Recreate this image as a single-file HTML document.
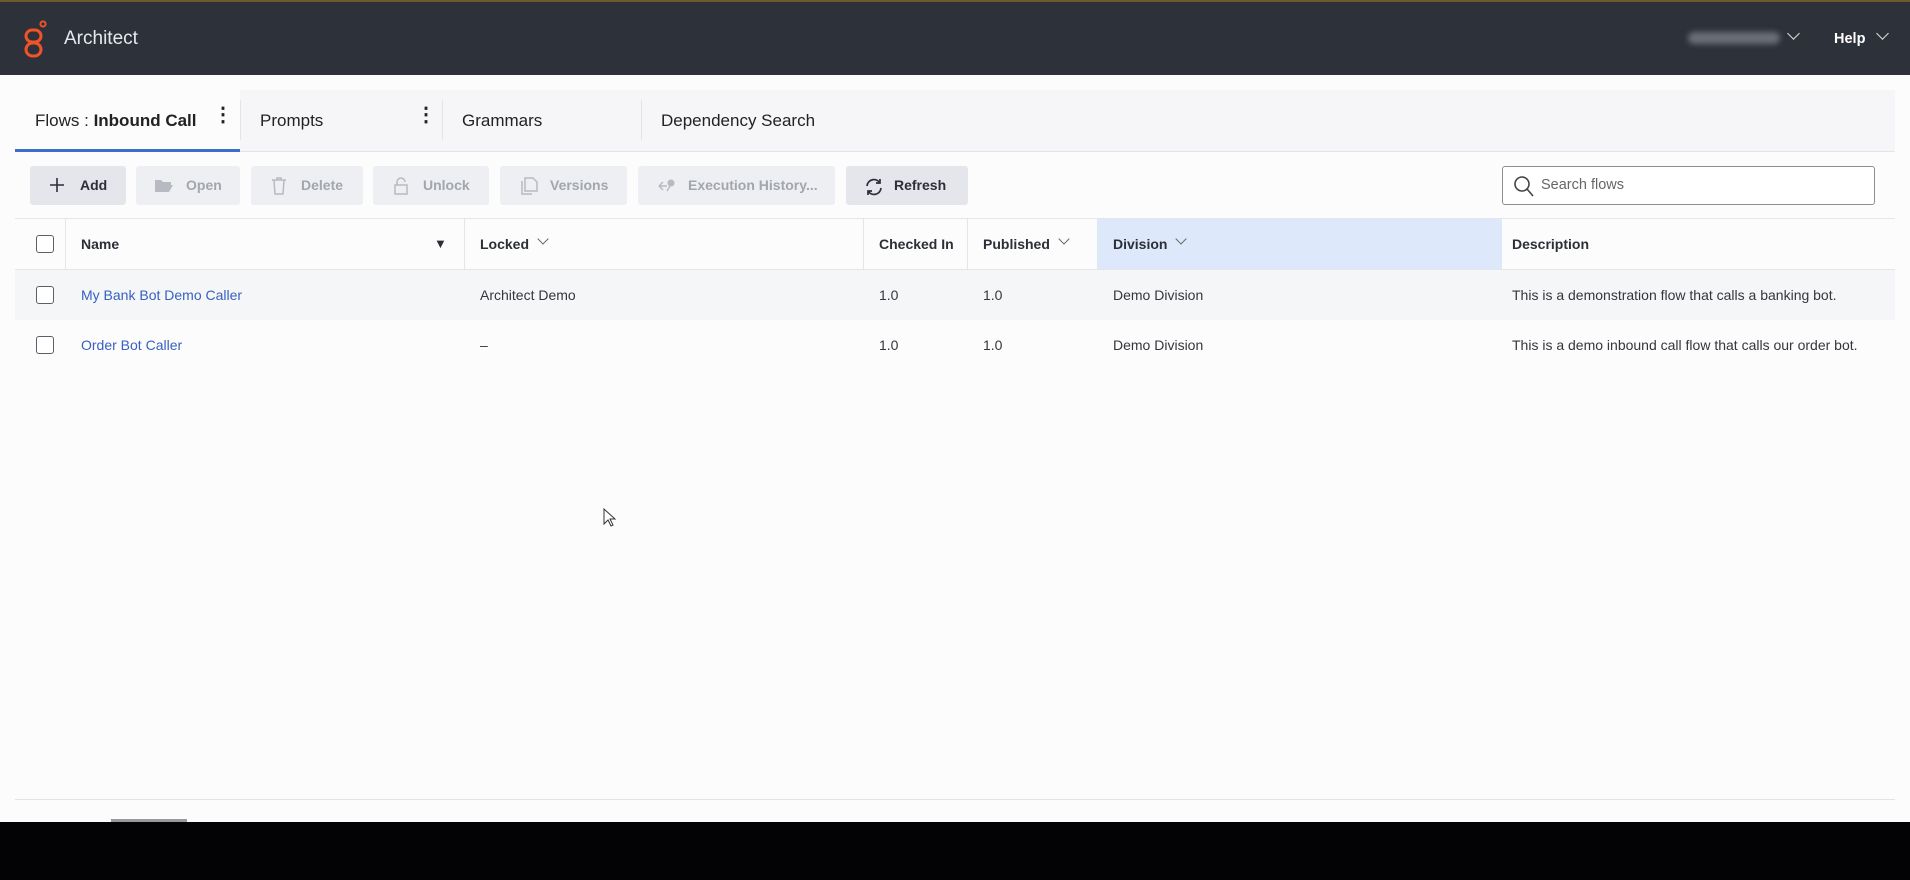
<!DOCTYPE html>
<html><head><meta charset="utf-8"><style>
*{box-sizing:border-box;margin:0;padding:0}
body{width:1910px;height:880px;background:#fcfcfc;font-family:"Liberation Sans",sans-serif;position:relative;overflow:hidden;color:#2c2f36}
.abs{position:absolute}
.hdr{left:0;top:0;width:1910px;height:75px;background:#2d3139;border-top:2px solid #6b5a2e}
.tabs{left:15px;top:90px;width:1880px;height:62px;background:#f6f6f8;border-bottom:1px solid #e2e4e8}
.tab{position:absolute;top:0;height:62px;font-size:17px;line-height:62px;color:#222}
.sep{position:absolute;top:10px;width:1px;height:40px;background:#e2e4e8}
.btn{position:absolute;top:166px;height:39px;border-radius:3px;background:#eeeff2;font-size:14px;font-weight:bold;color:#a2a6ad;line-height:39px}
.btn.on{background:#e4e6eb;color:#2c2f36}
.btn svg{position:absolute;top:11px}
.th{position:absolute;top:219px;height:50px;font-size:14px;font-weight:bold;line-height:50px;color:#2c2f36}
.td{position:absolute;height:50px;font-size:14px;line-height:50px;color:#33363c}
.cb{position:absolute;left:36px;width:18px;height:18px;border:1.6px solid #5d6068;border-radius:3px;background:#fff}
.vl{position:absolute;top:219px;width:1px;height:50px;background:#e4e6ea}
a{color:#3860c0;text-decoration:none}
.chev{display:inline-block;width:8px;height:8px;border-right:1.3px solid #666;border-bottom:1.3px solid #666;transform:rotate(45deg);margin-left:10px;position:relative;top:-6px}
</style></head><body>
<div class="abs hdr">
<svg class="abs" style="left:22px;top:18px" width="28" height="40" viewBox="0 0 28 40"><rect x="4" y="10" width="15" height="12" rx="6" fill="none" stroke="#f0522a" stroke-width="3"/><rect x="4" y="23" width="15" height="13" rx="6.5" fill="none" stroke="#f0522a" stroke-width="3"/><circle cx="21" cy="4" r="2.6" fill="none" stroke="#f0522a" stroke-width="2"/></svg>
<div class="abs" style="left:64px;top:26px;font-size:19px;color:#e4e8ef">Architect</div>
<div class="abs" style="left:1688px;top:30px;width:92px;height:12px;background:#6a6e76;border-radius:6px;filter:blur(3px)"></div>
<div class="abs" style="left:1789px;top:27px;width:9px;height:9px;border-right:1.5px solid #ddd;border-bottom:1.5px solid #ddd;transform:rotate(45deg)"></div>
<div class="abs" style="left:1834px;top:29px;font-size:14.5px;font-weight:bold;color:#fff">Help</div>
<div class="abs" style="left:1878px;top:27px;width:9px;height:9px;border-right:1.5px solid #ddd;border-bottom:1.5px solid #ddd;transform:rotate(45deg)"></div>
</div>
<div class="abs tabs">
<div class="tab" style="left:0;width:225px;background:#fcfcfc;border-bottom:3px solid #3b6ec8;height:62px;padding-left:20px">Flows : <b>Inbound Call</b></div>
<div class="tab" style="left:198px;font-size:20px;font-weight:bold;line-height:50px">⋮</div>
<div class="sep" style="left:225px"></div>
<div class="tab" style="left:245px">Prompts</div>
<div class="tab" style="left:401px;font-size:20px;font-weight:bold;line-height:50px">⋮</div>
<div class="sep" style="left:427px"></div>
<div class="tab" style="left:447px">Grammars</div>
<div class="sep" style="left:626px"></div>
<div class="tab" style="left:646px">Dependency Search</div>
</div>
<div class="btn on" style="left:30px;width:96px"><svg style="left:19px" width="16" height="16"><path d="M8 1v14M1 8h14" stroke="#2c2f36" stroke-width="1.6"/></svg><span style="position:absolute;left:50px">Add</span></div>
<div class="btn" style="left:136px;width:104px"><svg style="left:18px" width="20" height="17"><path d="M1 3h6l2 2h8v3H5L1 15z M5 8h14l-4 7H1z" fill="#b7bac0"/></svg><span style="position:absolute;left:50px">Open</span></div>
<div class="btn" style="left:251px;width:112px"><svg style="left:20px" width="16" height="18"><path d="M1 3h14M6 3V1h4v2M3 3l1 14h8l1-14" fill="none" stroke="#b7bac0" stroke-width="1.5"/></svg><span style="position:absolute;left:50px">Delete</span></div>
<div class="btn" style="left:373px;width:116px"><svg style="left:20px" width="16" height="18"><path d="M4 8V5a4 4 0 0 1 8 0M2 8h12v9H2z" fill="none" stroke="#b7bac0" stroke-width="1.5"/></svg><span style="position:absolute;left:50px">Unlock</span></div>
<div class="btn" style="left:500px;width:127px"><svg style="left:20px" width="18" height="18"><path d="M5 1h8l4 4v9H5z M2 4v13h10" fill="none" stroke="#b7bac0" stroke-width="1.5"/></svg><span style="position:absolute;left:50px">Versions</span></div>
<div class="btn" style="left:638px;width:197px"><svg style="left:18px" width="20" height="18"><path d="M3 9h8M3 9l4-4M3 9l4 4M11 14l3-5" fill="none" stroke="#b7bac0" stroke-width="1.5"/><circle cx="15" cy="6" r="3.5" fill="#b7bac0"/></svg><span style="position:absolute;left:50px">Execution History...</span></div>
<div class="btn on" style="left:846px;width:122px"><svg style="left:18px" width="20" height="20"><path d="M3 9a7 7 0 0 1 13-3M17 11a7 7 0 0 1-13 3M16 2v4h-4M4 18v-4h4" fill="none" stroke="#2c2f36" stroke-width="1.7"/></svg><span style="position:absolute;left:48px">Refresh</span></div>
<div class="abs" style="left:1502px;top:166px;width:373px;height:39px;border:1.5px solid #8a8e95;border-radius:3px;background:#fff"><svg class="abs" style="left:10px;top:8px" width="22" height="24"><circle cx="9" cy="9" r="7" fill="none" stroke="#444" stroke-width="1.6"/><path d="M14 14l6 7" stroke="#444" stroke-width="1.6"/></svg><span class="abs" style="left:38px;top:10px;font-size:14.5px;color:#666">Search flows</span></div>
<div class="abs" style="left:15px;top:218px;width:1880px;height:1px;background:#e4e6ea"></div>
<div class="abs" style="left:1097px;top:219px;width:405px;height:50px;background:#dde8fa"></div>
<div class="abs" style="left:15px;top:269px;width:1880px;height:1px;background:#e4e6ea"></div>
<div class="abs" style="left:15px;top:270px;width:1880px;height:50px;background:#f5f6f8"></div>
<div class="vl" style="left:65px"></div><div class="vl" style="left:464px"></div><div class="vl" style="left:863px"></div><div class="vl" style="left:967px"></div>
<div class="cb" style="top:235px"></div>
<div class="th" style="left:81px">Name</div>
<div class="th" style="left:434px;font-size:13px">▼</div>
<div class="th" style="left:480px">Locked<span class="chev"></span></div>
<div class="th" style="left:879px">Checked In</div>
<div class="th" style="left:983px">Published<span class="chev"></span></div>
<div class="th" style="left:1113px">Division<span class="chev"></span></div>
<div class="th" style="left:1512px">Description</div>
<div class="cb" style="top:286px"></div>
<div class="td" style="top:270px;left:81px"><a>My Bank Bot Demo Caller</a></div>
<div class="td" style="top:270px;left:480px">Architect Demo</div>
<div class="td" style="top:270px;left:879px">1.0</div>
<div class="td" style="top:270px;left:983px">1.0</div>
<div class="td" style="top:270px;left:1113px">Demo Division</div>
<div class="td" style="top:270px;left:1512px">This is a demonstration flow that calls a banking bot.</div>
<div class="cb" style="top:336px"></div>
<div class="td" style="top:320px;left:81px"><a>Order Bot Caller</a></div>
<div class="td" style="top:320px;left:480px">–</div>
<div class="td" style="top:320px;left:879px">1.0</div>
<div class="td" style="top:320px;left:983px">1.0</div>
<div class="td" style="top:320px;left:1113px">Demo Division</div>
<div class="td" style="top:320px;left:1512px">This is a demo inbound call flow that calls our order bot.</div>
<svg class="abs" style="left:603px;top:508px" width="14" height="20"><path d="M1 1v15l4-4 3 6 2-1-3-6h5z" fill="#fff" stroke="#333" stroke-width="1"/></svg>
<div class="abs" style="left:15px;top:799px;width:1880px;height:1px;background:#e2e4e8"></div>
<div class="abs" style="left:111px;top:819px;width:76px;height:3px;background:#999"></div>
<div class="abs" style="left:0;top:822px;width:1910px;height:58px;background:#030305"></div>
</body></html>
